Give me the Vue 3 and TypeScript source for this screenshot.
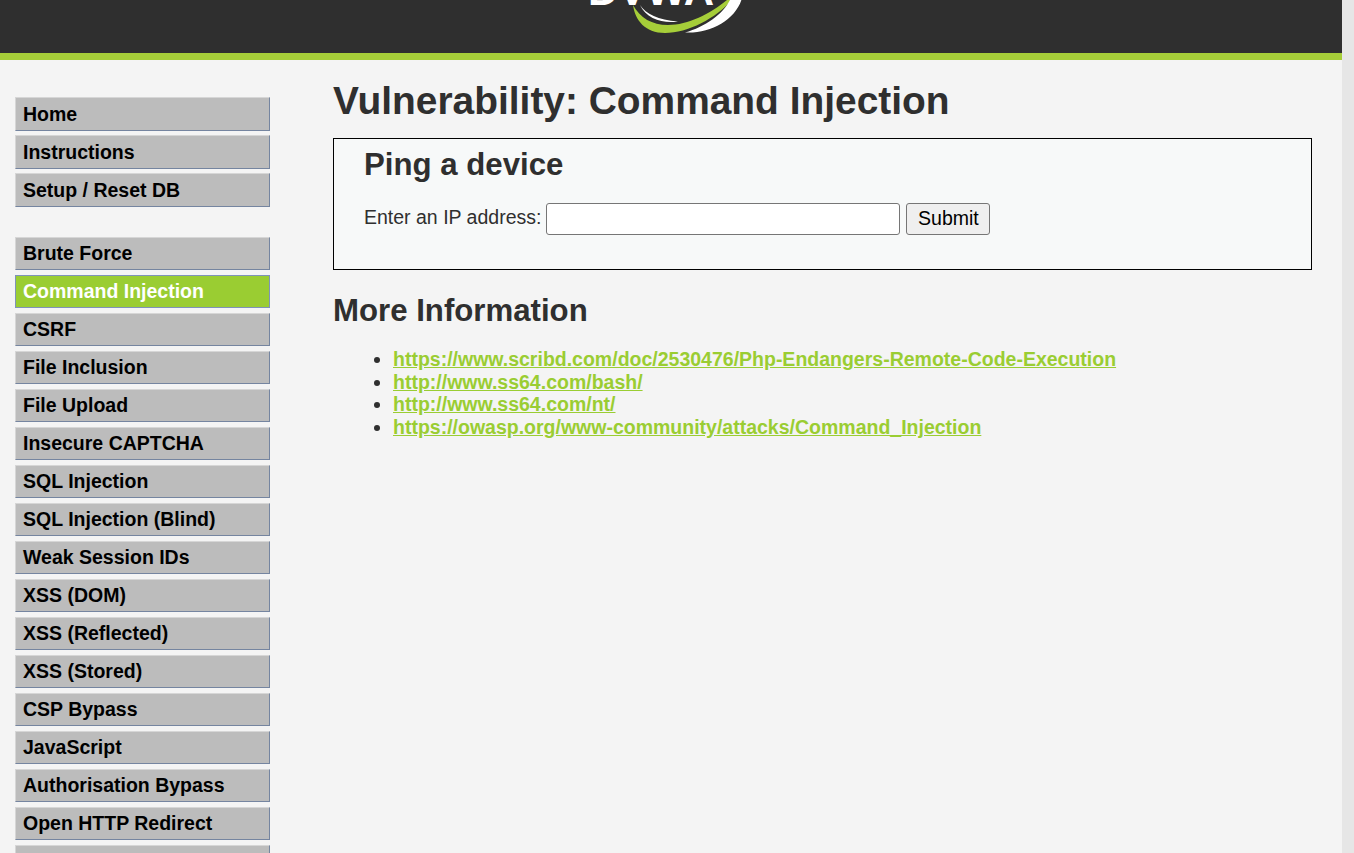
<script setup lang="ts">
const topMenu: string[] = ['Home', 'Instructions', 'Setup / Reset DB']
const mainMenu: string[] = [
  'Brute Force',
  'Command Injection',
  'CSRF',
  'File Inclusion',
  'File Upload',
  'Insecure CAPTCHA',
  'SQL Injection',
  'SQL Injection (Blind)',
  'Weak Session IDs',
  'XSS (DOM)',
  'XSS (Reflected)',
  'XSS (Stored)',
  'CSP Bypass',
  'JavaScript',
  'Authorisation Bypass',
  'Open HTTP Redirect',
  '' // next item, its label is below the fold
]
const activeItem = 'Command Injection'

const links: string[] = [
  'https://www.scribd.com/doc/2530476/Php-Endangers-Remote-Code-Execution',
  'http://www.ss64.com/bash/',
  'http://www.ss64.com/nt/',
  'https://owasp.org/www-community/attacks/Command_Injection'
]
</script>

<template>
  <div class="page">
    <div class="container">
      <header class="header">
        <svg class="logo" width="170" height="34" viewBox="0 0 170 34">
          <text x="8" y="5" class="logo-text">DVWA</text>
          <path d="M53 5 C55 20 65 33 85 33 C108 33 136 18 152 0 L147 0 C130 14 108 25 88 25 C72 25 60 18 53 5 Z" fill="#a6ce39" />
          <path d="M60 5 C66 14 78 20 98 21.5 C84 24 66 19 60 5 Z" fill="#fff" />
          <path d="M105 32.5 C130 34 156 20 162 -2 L150 0 C143 14 125 27 105 32.5 Z" fill="#fff" />
        </svg>
      </header>
      <div class="body-row">
        <nav class="sidebar">
          <ul class="menu menu-top">
            <li v-for="item in topMenu" :key="item" class="menu-item">{{ item }}</li>
          </ul>
          <ul class="menu">
            <li
              v-for="item in mainMenu"
              :key="item"
              class="menu-item"
              :class="{ selected: item === activeItem }"
            >{{ item }}</li>
          </ul>
        </nav>
        <main class="content">
          <h1 class="title">Vulnerability: Command Injection</h1>
          <div class="vulnerable-code">
            <h2 class="box-title">Ping a device</h2>
            <form class="ping-form" @submit.prevent>
              <label for="ip" class="ip-label">Enter an IP address:</label>
              <input id="ip" class="ip-input" type="text" />
              <button class="submit" type="submit">Submit</button>
            </form>
          </div>
          <h2 class="more-title">More Information</h2>
          <ul class="links">
            <li v-for="link in links" :key="link">
              <a :href="link">{{ link }}</a>
            </li>
          </ul>
        </main>
      </div>
    </div>
    <div class="scrollbar"></div>
  </div>
</template>

<style>
html,
body {
  margin: 0;
  height: 100%;
  overflow: hidden;
}
</style>

<style scoped>
.page {
  display: flex;
  height: 853px;
  overflow: hidden;
  background: #f4f4f4;
  font-family: "Liberation Sans", Arial, sans-serif;
  color: #2f2f2f;
}

.container {
  flex: 1;
  min-width: 0;
}

.scrollbar {
  width: 12px;
  background: #e6e6e6;
}

.header {
  height: 53px;
  background: #2f2f2f;
  border-bottom: 7px solid #a6ce39;
  overflow: hidden;
  display: flex;
  justify-content: center;
}

.logo {
  display: block;
  margin-right: 12px;
}

.logo-text {
  font-family: "Liberation Sans", Arial, sans-serif;
  font-size: 42px;
  font-weight: 700;
  fill: #fff;
}

.body-row {
  display: flex;
}

.sidebar {
  width: 255px;
  flex: none;
  padding: 37px 0 0 15px;
}

.menu {
  list-style: none;
  margin: 0;
  padding: 0;
  display: flex;
  flex-direction: column;
  gap: 5px;
}

.menu-top {
  gap: 4px;
  margin-bottom: 30px;
}

.menu-item {
  box-sizing: border-box;
  height: 33px;
  padding-left: 7px;
  line-height: 30px;
  font-size: 19.5px;
  font-weight: 700;
  color: #000;
  background: #bcbcbc;
  border-top: 1px solid #d6d6d6;
  border-left: 1px solid #d6d6d6;
  border-right: 1px solid #7585a0;
  border-bottom: 1px solid #7585a0;
}

.menu-top .menu-item {
  height: 34px;
  line-height: 32px;
}

.menu-item.selected {
  color: #fff;
  background: #9acd32;
  border-color: #7f93b8;
}

.content {
  flex: 1;
  min-width: 0;
  padding: 0 30px 0 63px;
}

.title {
  margin: 18px 0 0;
  font-size: 38.9px;
  line-height: 46px;
  font-weight: 700;
}

.vulnerable-code {
  box-sizing: border-box;
  height: 132px;
  margin-top: 14px;
  padding: 0 30px;
  background: #f7f9f9;
  border: 1px solid #000;
}

.box-title {
  margin: 9px 0 0;
  font-size: 31.2px;
  line-height: 34px;
  font-weight: 700;
}

.ping-form {
  display: flex;
  align-items: center;
  margin-top: 21px;
  font-size: 19.5px;
}

.ip-label {
  margin-top: -4px;
}

.ip-input {
  box-sizing: border-box;
  width: 354px;
  height: 32px;
  margin-left: 5px;
  padding: 0 4px;
  background: #fff;
  border: 1px solid #767676;
  border-radius: 3px;
}

.submit {
  box-sizing: border-box;
  width: 84px;
  height: 32px;
  margin-left: 6px;
  padding: 0 0 2px;
  font: inherit;
  color: #000;
  background: #efefef;
  border: 1px solid #767676;
  border-radius: 3px;
}

.more-title {
  margin: 23px 0 0;
  font-size: 31.2px;
  line-height: 36px;
  font-weight: 700;
}

.links {
  margin: 19px 0 0;
  padding: 0 0 0 60px;
  font-size: 19.5px;
  line-height: 22.7px;
}

.links a {
  font-weight: 700;
  color: #9acd32;
}
</style>
